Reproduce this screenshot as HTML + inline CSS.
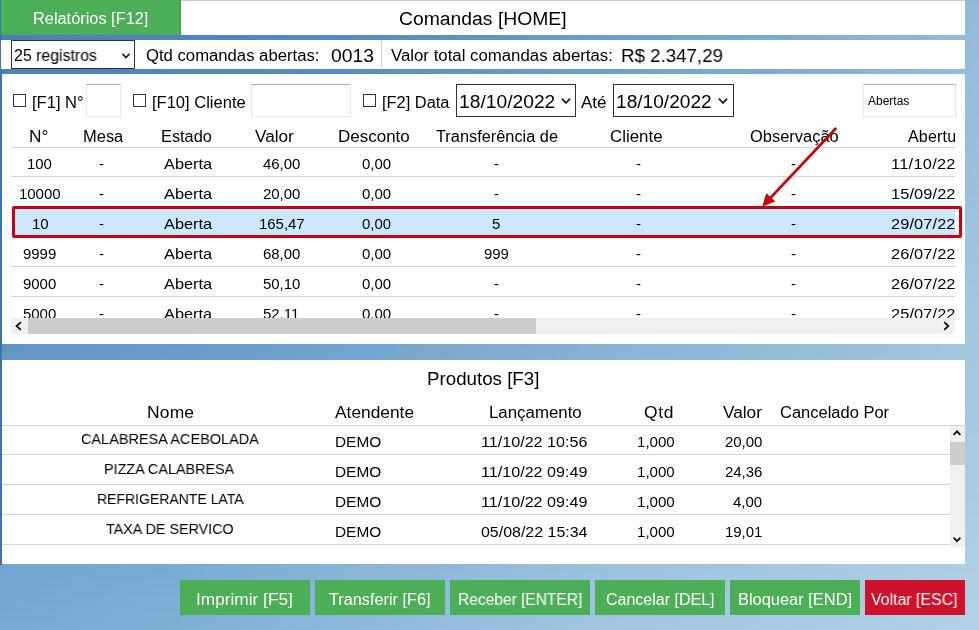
<!DOCTYPE html>
<html lang="pt-BR">
<head>
<meta charset="utf-8">
<title>Comandas</title>
<style>
html,body{margin:0;padding:0}
body{width:979px;height:630px;overflow:hidden;position:relative;font-family:"Liberation Sans","DejaVu Sans",sans-serif;
background:#7fadd4;}
#bg{position:absolute;left:0;top:0;width:979px;height:630px;
background:linear-gradient(90deg,#78abd3 0%,#7eb0d6 17%,#94bddc 43%,#a3c6e1 63%,#b2d1e5 100%);}
#bg2{position:absolute;left:0;top:0;width:979px;height:630px;
background:linear-gradient(90deg,#467cb5 0%,#5287bd 34%,#5d91c5 50%,#7aa9d2 81%,#93badc 100%);
-webkit-mask-image:linear-gradient(180deg,#000 0%,transparent 100%);mask-image:linear-gradient(180deg,#000 0%,transparent 100%);}
.abs{position:absolute}
.white{position:absolute;background:#fff}
.t{position:absolute;white-space:pre;line-height:20px;height:20px;color:#000;will-change:transform;transform-origin:0 0}
.hl{position:absolute;height:1px;background:#d4d4d4}
.btn{position:absolute;top:580px;height:35px;background:#4dae58}
.cb{position:absolute;width:11px;height:11px;border:1px solid #333;background:#fff;top:94px}
.inp{position:absolute;background:#fff;border:1px solid #e3e9ef;border-top-color:#abadb3;box-sizing:border-box}
.sel{position:absolute;background:#fff;border:1px solid #333;box-sizing:border-box}
</style>
</head>
<body>
<div id="bg"></div><div id="bg2"></div>
<div class="abs" style="left:0;top:0;width:1.5px;height:565px;background:#3d74ae"></div>

<!-- top bar -->
<div class="abs" style="left:1px;top:0;width:180px;height:35px;background:#4dae58;box-sizing:border-box;border-right:1px solid #3f9c49"></div>
<div class="white" style="left:181px;top:0;width:783.5px;height:35px;border-top:1px solid #c9c9c9;box-sizing:border-box"></div>

<!-- second row -->
<div class="white" style="left:1px;top:40px;width:963.5px;height:29px"></div>
<div class="sel" style="left:11px;top:40px;width:124px;height:29px"></div>
<svg class="abs" style="left:121px;top:52px" width="10" height="8" viewBox="0 0 10 8"><path d="M1.5 1.8 L5 5.6 L8.5 1.8" fill="none" stroke="#222" stroke-width="1.7"/></svg>
<div class="abs" style="left:381px;top:41px;width:1px;height:27px;background:#d0d0d0"></div>

<!-- comandas panel -->
<div class="white" style="left:1.5px;top:74px;width:963px;height:269.5px"></div>
<div class="cb" style="left:13px"></div>
<div class="inp" style="left:86px;top:84px;width:35px;height:32.5px"></div>
<div class="cb" style="left:133px"></div>
<div class="inp" style="left:251px;top:84px;width:99.5px;height:32.5px"></div>
<div class="cb" style="left:363px"></div>
<div class="sel" style="left:456px;top:84px;width:120px;height:33px"></div>
<svg class="abs" style="left:561px;top:97px" width="10" height="8" viewBox="0 0 10 8"><path d="M0.9 1.6 L5 5.9 L9.1 1.6" fill="none" stroke="#222" stroke-width="1.7"/></svg>
<div class="sel" style="left:613px;top:84px;width:120.5px;height:33px"></div>
<svg class="abs" style="left:718px;top:97px" width="10" height="8" viewBox="0 0 10 8"><path d="M0.9 1.6 L5 5.9 L9.1 1.6" fill="none" stroke="#222" stroke-width="1.7"/></svg>
<div class="inp" style="left:863px;top:84px;width:92.5px;height:32.5px"></div>

<!-- grid lines -->
<div class="hl" style="left:11px;width:944px;top:147px"></div>
<div class="hl" style="left:11px;width:944px;top:176px"></div>
<div class="hl" style="left:11px;width:944px;top:266px"></div>
<div class="hl" style="left:11px;width:944px;top:296px"></div>
<!-- selected row -->
<div class="abs" style="left:12px;top:206px;width:950px;height:32px;box-sizing:border-box;border:3px solid #c9000d;border-radius:2px;background:#fff"></div>
<div class="abs" style="left:15px;top:209px;width:940px;height:26px;background:#cce8ff"></div>

<!-- clip of grid -->
<div id="grid" class="abs" style="left:11px;top:120px;width:944px;height:198px;overflow:hidden"><div class="abs" style="left:-11px;top:-120px;width:979px;height:630px">
<span class="t" style="left:908.28px;top:127.00px;font-size:16px;letter-spacing:0.200px;">Abertura</span>
<span class="t" style="left:27.43px;top:154.00px;font-size:15px;letter-spacing:-0.050px;">100</span>
<span class="t" style="left:99.00px;top:154.00px;font-size:15px;letter-spacing:-0.050px;">-</span>
<span class="t" style="left:163.86px;top:154.00px;font-size:15px;transform:scaleX(1.0898);">Aberta</span>
<span class="t" style="left:262.93px;top:154.00px;font-size:15px;letter-spacing:-0.050px;">46,00</span>
<span class="t" style="left:361.97px;top:154.00px;font-size:15px;letter-spacing:-0.050px;">0,00</span>
<span class="t" style="left:493.70px;top:154.00px;font-size:15px;letter-spacing:-0.050px;">-</span>
<span class="t" style="left:636.30px;top:154.00px;font-size:15px;letter-spacing:-0.050px;">-</span>
<span class="t" style="left:790.50px;top:154.00px;font-size:15px;letter-spacing:-0.050px;">-</span>
<span class="t" style="left:890.56px;top:154.00px;font-size:15px;letter-spacing:0.267px;transform:scaleX(1.0900);">11/10/22</span>
<span class="t" style="left:19.14px;top:184.00px;font-size:15px;letter-spacing:-0.050px;">10000</span>
<span class="t" style="left:99.00px;top:184.00px;font-size:15px;letter-spacing:-0.050px;">-</span>
<span class="t" style="left:163.86px;top:184.00px;font-size:15px;transform:scaleX(1.0898);">Aberta</span>
<span class="t" style="left:262.93px;top:184.00px;font-size:15px;letter-spacing:-0.050px;">20,00</span>
<span class="t" style="left:361.97px;top:184.00px;font-size:15px;letter-spacing:-0.050px;">0,00</span>
<span class="t" style="left:493.70px;top:184.00px;font-size:15px;letter-spacing:-0.050px;">-</span>
<span class="t" style="left:636.30px;top:184.00px;font-size:15px;letter-spacing:-0.050px;">-</span>
<span class="t" style="left:790.50px;top:184.00px;font-size:15px;letter-spacing:-0.050px;">-</span>
<span class="t" style="left:890.56px;top:184.00px;font-size:15px;letter-spacing:0.108px;transform:scaleX(1.0900);">15/09/22</span>
<span class="t" style="left:31.58px;top:214.00px;font-size:15px;letter-spacing:-0.050px;">10</span>
<span class="t" style="left:99.00px;top:214.00px;font-size:15px;letter-spacing:-0.050px;">-</span>
<span class="t" style="left:163.86px;top:214.00px;font-size:15px;transform:scaleX(1.0898);">Aberta</span>
<span class="t" style="left:258.78px;top:214.00px;font-size:15px;letter-spacing:-0.050px;">165,47</span>
<span class="t" style="left:361.97px;top:214.00px;font-size:15px;letter-spacing:-0.050px;">0,00</span>
<span class="t" style="left:492.03px;top:214.00px;font-size:15px;letter-spacing:-0.050px;">5</span>
<span class="t" style="left:636.30px;top:214.00px;font-size:15px;letter-spacing:-0.050px;">-</span>
<span class="t" style="left:790.50px;top:214.00px;font-size:15px;letter-spacing:-0.050px;">-</span>
<span class="t" style="left:890.56px;top:214.00px;font-size:15px;letter-spacing:0.108px;transform:scaleX(1.0900);">29/07/22</span>
<span class="t" style="left:23.29px;top:244.00px;font-size:15px;letter-spacing:-0.050px;">9999</span>
<span class="t" style="left:99.00px;top:244.00px;font-size:15px;letter-spacing:-0.050px;">-</span>
<span class="t" style="left:163.86px;top:244.00px;font-size:15px;transform:scaleX(1.0898);">Aberta</span>
<span class="t" style="left:262.93px;top:244.00px;font-size:15px;letter-spacing:-0.050px;">68,00</span>
<span class="t" style="left:361.97px;top:244.00px;font-size:15px;letter-spacing:-0.050px;">0,00</span>
<span class="t" style="left:483.73px;top:244.00px;font-size:15px;letter-spacing:-0.050px;">999</span>
<span class="t" style="left:636.30px;top:244.00px;font-size:15px;letter-spacing:-0.050px;">-</span>
<span class="t" style="left:790.50px;top:244.00px;font-size:15px;letter-spacing:-0.050px;">-</span>
<span class="t" style="left:890.56px;top:244.00px;font-size:15px;letter-spacing:0.108px;transform:scaleX(1.0900);">26/07/22</span>
<span class="t" style="left:23.29px;top:274.00px;font-size:15px;letter-spacing:-0.050px;">9000</span>
<span class="t" style="left:99.00px;top:274.00px;font-size:15px;letter-spacing:-0.050px;">-</span>
<span class="t" style="left:163.86px;top:274.00px;font-size:15px;transform:scaleX(1.0898);">Aberta</span>
<span class="t" style="left:262.93px;top:274.00px;font-size:15px;letter-spacing:-0.050px;">50,10</span>
<span class="t" style="left:361.97px;top:274.00px;font-size:15px;letter-spacing:-0.050px;">0,00</span>
<span class="t" style="left:493.70px;top:274.00px;font-size:15px;letter-spacing:-0.050px;">-</span>
<span class="t" style="left:636.30px;top:274.00px;font-size:15px;letter-spacing:-0.050px;">-</span>
<span class="t" style="left:790.50px;top:274.00px;font-size:15px;letter-spacing:-0.050px;">-</span>
<span class="t" style="left:890.56px;top:274.00px;font-size:15px;letter-spacing:0.108px;transform:scaleX(1.0900);">26/07/22</span>
<span class="t" style="left:23.29px;top:304.00px;font-size:15px;letter-spacing:-0.050px;">5000</span>
<span class="t" style="left:99.00px;top:304.00px;font-size:15px;letter-spacing:-0.050px;">-</span>
<span class="t" style="left:163.86px;top:304.00px;font-size:15px;transform:scaleX(1.0898);">Aberta</span>
<span class="t" style="left:263.48px;top:304.00px;font-size:15px;letter-spacing:-0.050px;">52,11</span>
<span class="t" style="left:361.97px;top:304.00px;font-size:15px;letter-spacing:-0.050px;">0,00</span>
<span class="t" style="left:493.70px;top:304.00px;font-size:15px;letter-spacing:-0.050px;">-</span>
<span class="t" style="left:636.30px;top:304.00px;font-size:15px;letter-spacing:-0.050px;">-</span>
<span class="t" style="left:790.50px;top:304.00px;font-size:15px;letter-spacing:-0.050px;">-</span>
<span class="t" style="left:890.56px;top:304.00px;font-size:15px;letter-spacing:0.108px;transform:scaleX(1.0900);">25/07/22</span>
</div></div>

<!-- h scrollbar -->
<div class="abs" style="left:11px;top:318px;width:944px;height:16px;background:#f0f0f0"></div>
<div class="abs" style="left:27.5px;top:318px;width:508.5px;height:16px;background:#cdcdcd"></div>
<svg class="abs" style="left:11px;top:318px" width="16" height="16" viewBox="0 0 16 16"><path d="M9.8 4.2 L5.6 8 L9.8 11.8" fill="none" stroke="#111" stroke-width="1.8"/></svg>
<svg class="abs" style="left:938px;top:318px" width="16" height="16" viewBox="0 0 16 16"><path d="M6.2 4.2 L10.4 8 L6.2 11.8" fill="none" stroke="#111" stroke-width="1.8"/></svg>

<!-- arrow -->
<svg class="abs" style="left:740px;top:110px;z-index:5" width="120" height="110" viewBox="740 110 120 110">
<line x1="836.2" y1="128" x2="768" y2="200.5" stroke="#c9000d" stroke-width="2.6"/>
<polygon points="762.3,206.5 766.2,193.2 775.4,201.6" fill="#c9000d"/>
</svg>

<!-- produtos panel -->
<div class="white" style="left:1.5px;top:359.5px;width:963px;height:204.5px"></div>
<div class="hl" style="left:1.5px;width:963px;top:425px"></div>
<div class="hl" style="left:1.5px;width:948px;top:454px"></div>
<div class="hl" style="left:1.5px;width:948px;top:484px"></div>
<div class="hl" style="left:1.5px;width:948px;top:514px"></div>
<div class="hl" style="left:1.5px;width:948px;top:544px"></div>
<!-- v scrollbar -->
<div class="abs" style="left:949.5px;top:426px;width:15px;height:121px;background:#f0f0f0"></div>
<div class="abs" style="left:949.5px;top:441.7px;width:15px;height:23px;background:#cdcdcd"></div>
<svg class="abs" style="left:949px;top:426px" width="16" height="16" viewBox="0 0 16 16"><path d="M4.6 8.9 L8 5.4 L11.4 8.9" fill="none" stroke="#111" stroke-width="1.8"/></svg>
<svg class="abs" style="left:949px;top:531px" width="16" height="16" viewBox="0 0 16 16"><path d="M4.6 6.6 L8 10.1 L11.4 6.6" fill="none" stroke="#111" stroke-width="1.8"/></svg>

<!-- buttons -->
<div class="btn" style="left:180px;width:130px"></div>
<div class="btn" style="left:315px;width:130px"></div>
<div class="btn" style="left:450px;width:140px"></div>
<div class="btn" style="left:595px;width:130px"></div>
<div class="btn" style="left:730px;width:130px"></div>
<div class="btn" style="left:865px;width:100px;background:#d0112b"></div>

<span class="t" style="left:33.16px;top:9.00px;font-size:16px;transform:scaleX(1.0215);color:#fff;">Relatórios [F12]</span>
<span class="t" style="left:398.73px;top:9.00px;font-size:18px;transform:scaleX(1.0742);">Comandas [HOME]</span>
<span class="t" style="left:13.79px;top:46.00px;font-size:16px;transform:scaleX(0.9920);">25 registros</span>
<span class="t" style="left:145.65px;top:46.00px;font-size:16px;transform:scaleX(1.0426);">Qtd comandas abertas:</span>
<span class="t" style="left:330.73px;top:46.00px;font-size:19px;transform:scaleX(1.0180);">0013</span>
<span class="t" style="left:390.64px;top:46.00px;font-size:16px;transform:scaleX(1.0498);">Valor total comandas abertas:</span>
<span class="t" style="left:621.46px;top:46.00px;font-size:19px;transform:scaleX(0.9841);">R$ 2.347,29</span>
<span class="t" style="left:32.06px;top:93.00px;font-size:16px;transform:scaleX(1.0344);">[F1] N°</span>
<span class="t" style="left:151.86px;top:93.00px;font-size:16px;transform:scaleX(1.0327);">[F10] Cliente</span>
<span class="t" style="left:382.06px;top:93.00px;font-size:16px;transform:scaleX(1.0253);">[F2] Data</span>
<span class="t" style="left:458.73px;top:92.00px;font-size:18px;transform:scaleX(1.0692);">18/10/2022</span>
<span class="t" style="left:580.93px;top:93.00px;font-size:16px;transform:scaleX(1.0631);">Até</span>
<span class="t" style="left:615.74px;top:92.00px;font-size:18px;transform:scaleX(1.0625);">18/10/2022</span>
<span class="t" style="left:868.46px;top:91.00px;font-size:12px;transform:scaleX(0.9931);">Abertas</span>
<span class="t" style="left:28.92px;top:127.00px;font-size:16px;transform:scaleX(1.0779);">N°</span>
<span class="t" style="left:83.46px;top:127.00px;font-size:16px;transform:scaleX(1.0296);">Mesa</span>
<span class="t" style="left:160.57px;top:127.00px;font-size:16px;transform:scaleX(1.0192);">Estado</span>
<span class="t" style="left:254.53px;top:127.00px;font-size:16px;transform:scaleX(1.0711);">Valor</span>
<span class="t" style="left:337.74px;top:127.00px;font-size:16px;transform:scaleX(1.0612);">Desconto</span>
<span class="t" style="left:435.56px;top:127.00px;font-size:16px;transform:scaleX(1.0209);">Transferência de</span>
<span class="t" style="left:609.74px;top:127.00px;font-size:16px;transform:scaleX(1.0543);">Cliente</span>
<span class="t" style="left:749.56px;top:127.00px;font-size:16px;transform:scaleX(1.0280);">Observação</span>
<span class="t" style="left:426.76px;top:369.00px;font-size:18px;transform:scaleX(1.0400);">Produtos [F3]</span>
<span class="t" style="left:147.02px;top:403.00px;font-size:16px;letter-spacing:0.165px;transform:scaleX(1.0900);">Nome</span>
<span class="t" style="left:334.72px;top:403.00px;font-size:16px;transform:scaleX(1.0837);">Atendente</span>
<span class="t" style="left:489.04px;top:403.00px;font-size:16px;transform:scaleX(1.0528);">Lançamento</span>
<span class="t" style="left:643.72px;top:403.00px;font-size:16px;letter-spacing:0.666px;transform:scaleX(1.0900);">Qtd</span>
<span class="t" style="left:722.62px;top:403.00px;font-size:16px;transform:scaleX(1.0768);">Valor</span>
<span class="t" style="left:779.66px;top:403.00px;font-size:16px;transform:scaleX(1.0306);">Cancelado Por</span>
<span class="t" style="left:80.55px;top:429.00px;font-size:15px;transform:scaleX(0.9650);">CALABRESA ACEBOLADA</span>
<span class="t" style="left:334.81px;top:432.00px;font-size:15px;transform:scaleX(1.0263);">DEMO</span>
<span class="t" style="left:481.27px;top:432.00px;font-size:15px;transform:scaleX(1.0754);">11/10/22 10:56</span>
<span class="t" style="left:636.52px;top:432.00px;font-size:15px;transform:scaleX(1.0056);">1,000</span>
<span class="t" style="left:725.13px;top:432.00px;font-size:15px;letter-spacing:-0.050px;">20,00</span>
<span class="t" style="left:104.35px;top:459.00px;font-size:15px;transform:scaleX(0.9588);">PIZZA CALABRESA</span>
<span class="t" style="left:334.81px;top:462.00px;font-size:15px;transform:scaleX(1.0263);">DEMO</span>
<span class="t" style="left:481.27px;top:462.00px;font-size:15px;transform:scaleX(1.0754);">11/10/22 09:49</span>
<span class="t" style="left:636.52px;top:462.00px;font-size:15px;transform:scaleX(1.0056);">1,000</span>
<span class="t" style="left:725.13px;top:462.00px;font-size:15px;letter-spacing:-0.050px;">24,36</span>
<span class="t" style="left:96.57px;top:489.00px;font-size:15px;transform:scaleX(0.9337);">REFRIGERANTE LATA</span>
<span class="t" style="left:334.81px;top:492.00px;font-size:15px;transform:scaleX(1.0263);">DEMO</span>
<span class="t" style="left:481.27px;top:492.00px;font-size:15px;transform:scaleX(1.0754);">11/10/22 09:49</span>
<span class="t" style="left:636.52px;top:492.00px;font-size:15px;transform:scaleX(1.0056);">1,000</span>
<span class="t" style="left:733.42px;top:492.00px;font-size:15px;letter-spacing:-0.050px;">4,00</span>
<span class="t" style="left:105.66px;top:519.00px;font-size:15px;transform:scaleX(0.9546);">TAXA DE SERVICO</span>
<span class="t" style="left:334.81px;top:522.00px;font-size:15px;transform:scaleX(1.0263);">DEMO</span>
<span class="t" style="left:481.28px;top:522.00px;font-size:15px;transform:scaleX(1.0634);">05/08/22 15:34</span>
<span class="t" style="left:636.52px;top:522.00px;font-size:15px;transform:scaleX(1.0056);">1,000</span>
<span class="t" style="left:725.13px;top:522.00px;font-size:15px;letter-spacing:-0.050px;">19,01</span>
<span class="t" style="left:196.22px;top:590.00px;font-size:16px;transform:scaleX(1.0788);color:#fff;">Imprimir [F5]</span>
<span class="t" style="left:328.77px;top:590.00px;font-size:16px;transform:scaleX(1.0169);color:#fff;">Transferir [F6]</span>
<span class="t" style="left:457.90px;top:590.00px;font-size:16px;transform:scaleX(0.9715);color:#fff;">Receber [ENTER]</span>
<span class="t" style="left:605.68px;top:590.00px;font-size:16px;transform:scaleX(0.9957);color:#fff;">Cancelar [DEL]</span>
<span class="t" style="left:737.66px;top:590.00px;font-size:16px;transform:scaleX(1.0261);color:#fff;">Bloquear [END]</span>
<span class="t" style="left:871.29px;top:590.00px;font-size:16px;transform:scaleX(0.9916);color:#fff;">Voltar [ESC]</span>
</body>
</html>
